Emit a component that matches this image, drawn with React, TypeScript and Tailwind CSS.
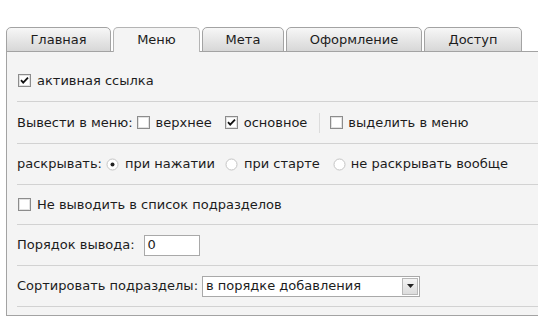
import React from 'react';

const font = { fontFamily: '"DejaVu Sans", Verdana, sans-serif' };

function Checkbox({ checked = false }: { checked?: boolean }) {
  return (
    <svg width="13" height="13" viewBox="0 0 13 13" className="shrink-0">
      <rect x="0.5" y="0.5" width="12" height="12" fill="#fff" stroke="#8c8c8c" />
      <rect x="1.5" y="1.5" width="10" height="10" fill="none" stroke="#e2e2e2" />
      {checked && <path d="M3 6.2 L5.2 8.6 L10 3.6" fill="none" stroke="#111" strokeWidth="1.8" />}
    </svg>
  );
}

function Radio({ checked = false }: { checked?: boolean }) {
  return (
    <svg width="13" height="13" viewBox="0 0 13 13" className="shrink-0">
      <circle cx="6.5" cy="6.5" r="5.5" fill="#fff" stroke="#c4c4c4" />
      {checked && <circle cx="6.5" cy="6.5" r="2" fill="#222" />}
    </svg>
  );
}

const tabs = [
  { label: 'Главная', w: 'w-[105px]' },
  { label: 'Меню', w: 'w-[87px]', active: true },
  { label: 'Мета', w: 'w-[82px]' },
  { label: 'Оформление', w: 'w-[136px]' },
  { label: 'Доступ', w: 'w-[98px]' },
];

export default function App() {
  return (
    <div className="w-[538px] h-[329px] overflow-hidden bg-white pt-[27px] pl-[6px] text-[13px] text-[#1c1c1c]" style={font}>
      {/* tabs */}
      <div className="relative z-10 flex gap-[2px] -mb-px h-[25px]">
        {tabs.map((t) =>
          t.active ? (
            <div
              key={t.label}
              className={`${t.w} flex items-center justify-center rounded-t-[5px] border border-b-0 border-[#b4b4b4] bg-[#f4f4f4] h-[25px]`}
            >
              {t.label}
            </div>
          ) : (
            <div
              key={t.label}
              className={`${t.w} flex items-center justify-center rounded-t-[5px] border border-[#a3a3a3] bg-gradient-to-b from-[#f7f7f7] to-[#d7d7d7] h-[25px]`}
            >
              {t.label}
            </div>
          ),
        )}
      </div>

      {/* panel */}
      <div className="w-[545px] h-[265px] border border-[#a3a3a3] bg-[#f4f4f4] pl-[10px] pt-[8px]">
        <div className="flex h-[42px] items-center gap-[6px] border-b border-[#d2d2d2] pl-px">
          <Checkbox checked />
          <span>активная ссылка</span>
        </div>

        <div className="flex h-[42px] items-center border-b border-[#d2d2d2]">
          <span>Вывести в меню:</span>
          <span className="ml-[4px] flex items-center gap-[6px]">
            <Checkbox />
            <span>верхнее</span>
          </span>
          <span className="ml-[13px] flex items-center gap-[6px]">
            <Checkbox checked />
            <span>основное</span>
          </span>
          <span className="ml-[12px] h-[20px] w-px bg-[#dcdcdc]" />
          <span className="ml-[10px] flex items-center gap-[5px]">
            <Checkbox />
            <span>выделить в меню</span>
          </span>
        </div>

        <div className="flex h-[41px] items-center border-b border-[#d2d2d2]">
          <span>раскрывать:</span>
          <span className="ml-[4px] flex items-center gap-[6px]">
            <Radio checked />
            <span>при нажатии</span>
          </span>
          <span className="ml-[10px] flex items-center gap-[6px]">
            <Radio />
            <span>при старте</span>
          </span>
          <span className="ml-[13px] flex items-center gap-[5px]">
            <Radio />
            <span>не раскрывать вообще</span>
          </span>
        </div>

        <div className="flex h-[40px] items-center gap-[6px] border-b border-[#d2d2d2] pl-px">
          <Checkbox />
          <span>Не выводить в список подразделов</span>
        </div>

        <div className="flex h-[41px] items-center border-b border-[#d2d2d2]">
          <span>Порядок вывода:</span>
          <div className="ml-[9px] flex h-[21px] w-[56px] items-center border border-[#a9a9a9] bg-white pl-[3px]">0</div>
        </div>

        <div className="flex h-[41px] items-center border-b border-[#d2d2d2]">
          <span>Сортировать подразделы:</span>
          <div className="ml-[4px] flex h-[21px] w-[218px] items-center justify-between border border-[#a9a9a9] bg-white pl-[3px] pr-px">
            <span>в порядке добавления</span>
            <span className="flex h-[17px] w-[16px] items-center justify-center border border-[#b8b8b8] bg-gradient-to-b from-[#f4f4f4] to-[#dcdcdc]">
              <svg width="7" height="4" viewBox="0 0 7 4">
                <path d="M0 0 H7 L3.5 4 Z" fill="#222" />
              </svg>
            </span>
          </div>
        </div>
      </div>
    </div>
  );
}
